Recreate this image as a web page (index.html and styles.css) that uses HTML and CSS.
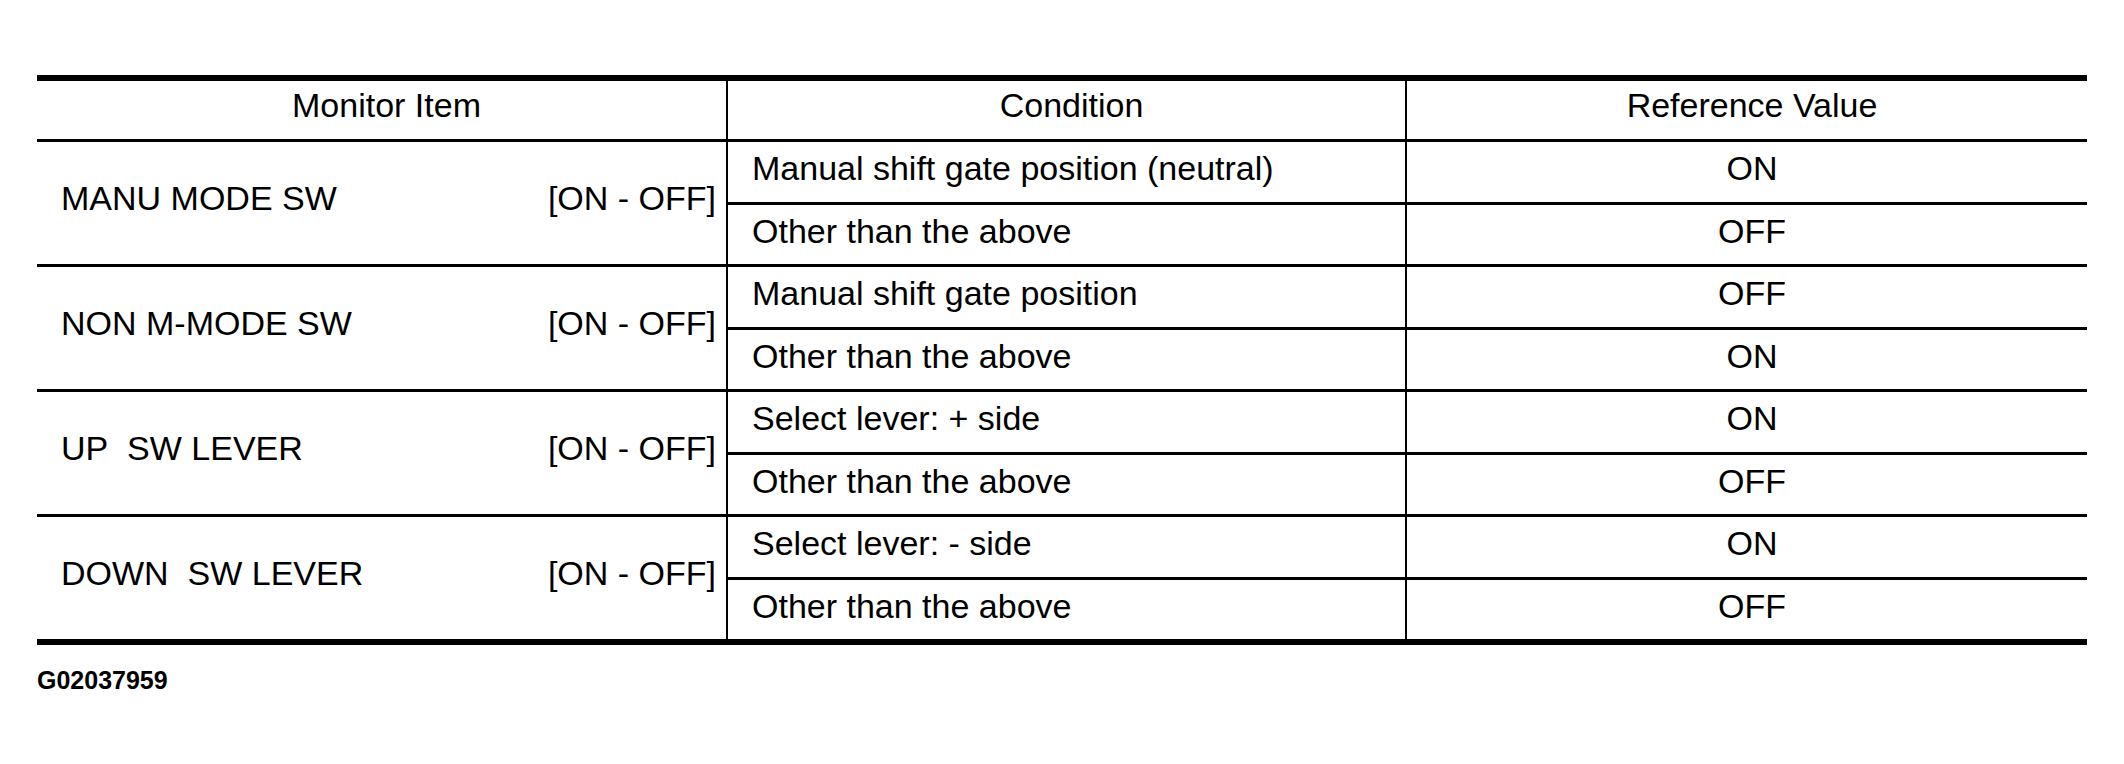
FILE: index.html
```html
<!DOCTYPE html>
<html>
<head>
<meta charset="utf-8">
<link rel="stylesheet" href="styles.css">
</head>
<body>
<div class="table">
  <div class="head">
    <div class="c1 hcell">Monitor Item</div>
    <div class="c2 hcell">Condition</div>
    <div class="c3 hcell">Reference Value</div>
  </div>

  <div class="group">
    <div class="c1 item"><span>MANU MODE SW</span><span>[ON - OFF]</span></div>
    <div class="subs">
      <div class="sub"><div class="c2 cond">Manual shift gate position (neutral)</div><div class="c3 val">ON</div></div>
      <div class="sub"><div class="c2 cond">Other than the above</div><div class="c3 val">OFF</div></div>
    </div>
  </div>

  <div class="group">
    <div class="c1 item"><span>NON M-MODE SW</span><span>[ON - OFF]</span></div>
    <div class="subs">
      <div class="sub"><div class="c2 cond">Manual shift gate position</div><div class="c3 val">OFF</div></div>
      <div class="sub"><div class="c2 cond">Other than the above</div><div class="c3 val">ON</div></div>
    </div>
  </div>

  <div class="group">
    <div class="c1 item"><span>UP&nbsp; SW LEVER</span><span>[ON - OFF]</span></div>
    <div class="subs">
      <div class="sub"><div class="c2 cond">Select lever: + side</div><div class="c3 val">ON</div></div>
      <div class="sub"><div class="c2 cond">Other than the above</div><div class="c3 val">OFF</div></div>
    </div>
  </div>

  <div class="group">
    <div class="c1 item"><span>DOWN&nbsp; SW LEVER</span><span>[ON - OFF]</span></div>
    <div class="subs">
      <div class="sub"><div class="c2 cond">Select lever: - side</div><div class="c3 val">ON</div></div>
      <div class="sub"><div class="c2 cond">Other than the above</div><div class="c3 val">OFF</div></div>
    </div>
  </div>
</div>
<div class="code">G02037959</div>
</body>
</html>
```

FILE: styles.css
```css
html, body {
  margin: 0;
  padding: 0;
  background: #ffffff;
}

body {
  font-family: "Liberation Sans", Arial, sans-serif;
  color: #000000;
}

.table {
  width: 2050px;
  margin: 75px 0 0 37px;
  border-top: 6px solid #000;
  border-bottom: 6px solid #000;
  font-size: 34px;
  line-height: 39px;
}

.head {
  display: flex;
  height: 58px;
  border-bottom: 3px solid #000;
}

.c1 {
  width: 689px;
  flex: none;
  border-right: 2px solid #000;
}

.c2 {
  width: 677px;
  flex: none;
  border-right: 2px solid #000;
}

.c3 {
  width: 680px;
  flex: none;
}

.hcell {
  display: flex;
  align-items: center;
  justify-content: center;
  padding: 0 0 9px 10px;
}

.hcell.c1 { width: 679px; }
.hcell.c2 { width: 667px; }
.hcell.c3 { width: 670px; }

.group {
  display: flex;
  border-bottom: 3px solid #000;
}

.group:last-child {
  border-bottom: none;
}

.item {
  display: flex;
  align-items: center;
  justify-content: space-between;
  padding: 0 10px 9px 24px;
  width: 655px;
}

.subs {
  display: flex;
  flex-direction: column;
}

.sub {
  display: flex;
  height: 59.5px;
}

.sub + .sub {
  border-top: 3px solid #000;
}

.cond {
  display: flex;
  align-items: center;
  padding: 0 0 6px 24px;
  width: 653px;
}

.val {
  display: flex;
  align-items: center;
  justify-content: center;
  padding: 0 0 6px 10px;
  width: 670px;
}

.code {
  margin: 21px 0 0 37px;
  font-size: 25px;
  line-height: 28px;
  font-weight: bold;
}
```
